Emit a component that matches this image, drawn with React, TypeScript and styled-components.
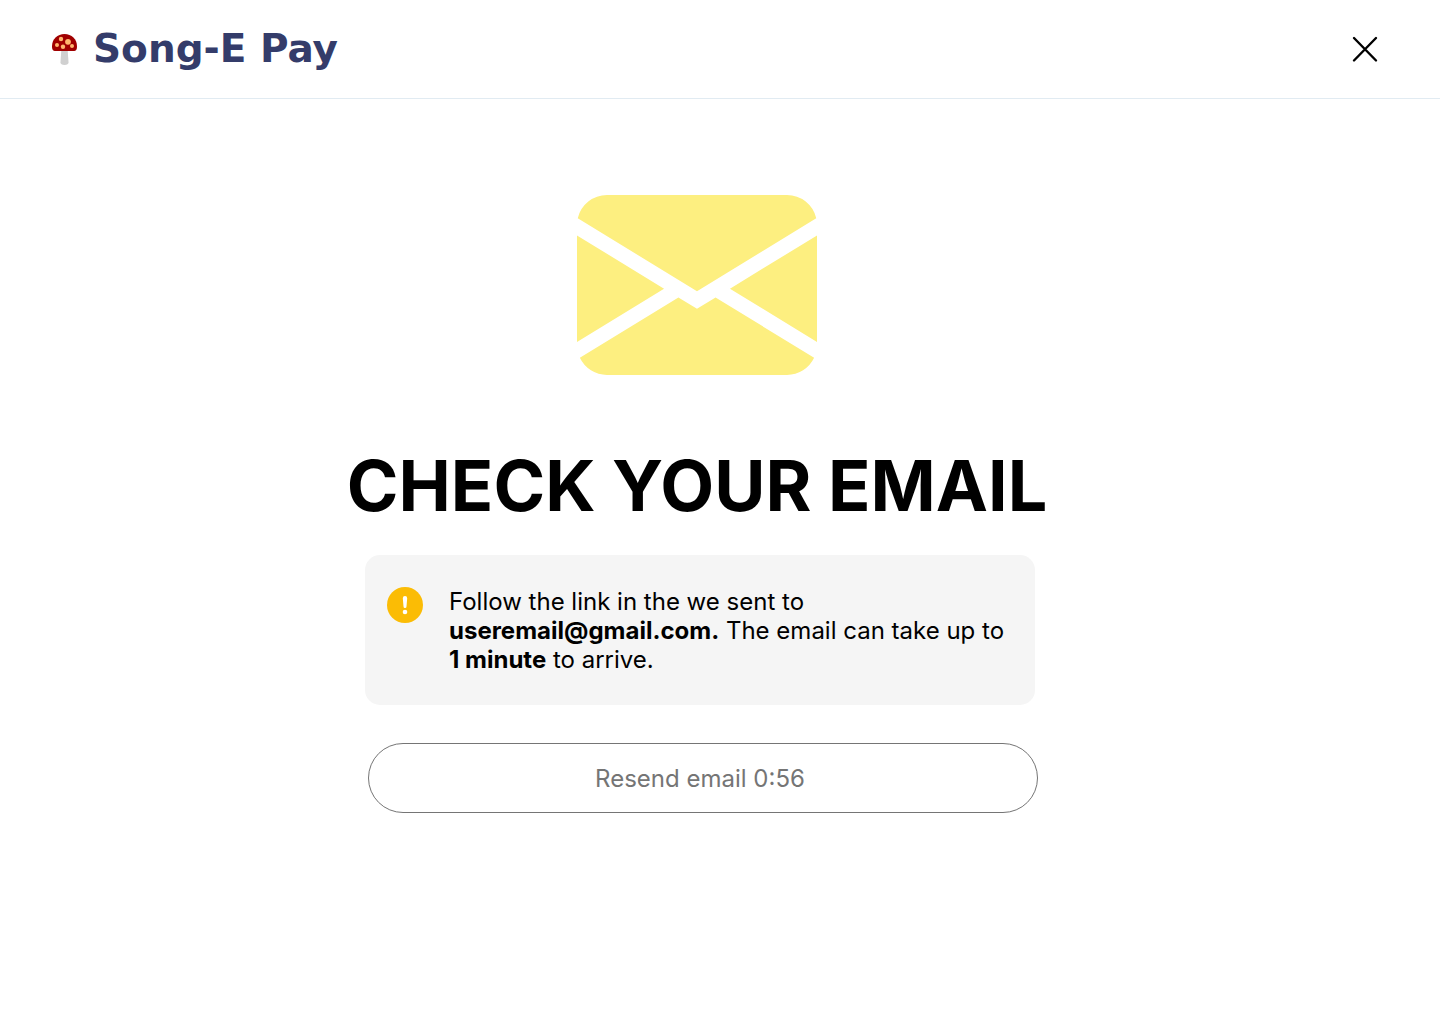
import React from "react";
import styled, { createGlobalStyle } from "styled-components";

const GlobalStyle = createGlobalStyle`
  * { box-sizing: border-box; }
  body {
    margin: 0;
    background: #fff;
    color: #000;
    font-family: Inter, "Liberation Sans", sans-serif;
  }
`;

const Header = styled.header`
  display: flex;
  align-items: center;
  justify-content: space-between;
  height: 99px;
  padding: 0 60px 0 52px;
  border-bottom: 1px solid #e1ebf2;
`;

const Brand = styled.a`
  display: flex;
  align-items: center;
  gap: 15px;
  color: #343c6a;
  font: 700 39px/56px "DejaVu Sans", sans-serif;
  text-decoration: none;
`;

const CloseButton = styled.button`
  display: flex;
  padding: 0;
  border: 0;
  background: none;
  color: #000;
  cursor: pointer;
`;

const Main = styled.main`
  display: flex;
  justify-content: center;
  padding: 96px 46px 48px 0;
`;

const Column = styled.div`
  display: flex;
  flex-direction: column;
  align-items: center;
  width: 100%;
  max-width: 682px;
`;

const Title = styled.h1`
  margin: 67px 0 26px;
  font-size: 70px;
  font-weight: 700;
  line-height: 87px;
  white-space: nowrap;
`;

const Notice = styled.section`
  display: flex;
  align-self: flex-end;
  align-items: flex-start;
  gap: 26px;
  width: 100%;
  max-width: 670px;
  margin-right: 3px;
  padding: 32px 22px 31px;
  border-radius: 15px;
  background: #f5f5f5;
`;

const NoticeIcon = styled.svg`
  flex: none;
`;

const NoticeText = styled.p`
  margin: 0;
  font-size: 24px;
  line-height: 29px;
`;

const ResendButton = styled.button`
  align-self: flex-end;
  width: 100%;
  max-width: 670px;
  height: 70px;
  margin-top: 38px;
  padding: 0 6px 0 0;
  border: 1px solid #757575;
  border-radius: 35px;
  background: none;
  color: #757575;
  font: 400 24px/29px Inter, "Liberation Sans", sans-serif;
`;

function Mushroom() {
  return (
    <svg width="26" height="32" viewBox="0 0 26 32" aria-hidden="true">
      <path d="M9.3 17h6.4l.8 12.2c0 1.8-1.3 2.8-4 2.8s-4-1-4-2.8z" fill="#d0d0d0" />
      <path d="M12.5 1C5.4 1 0 6.2 0 13.2c0 3.6 1 4.8 3.6 4.8h17.8c2.6 0 3.6-1.2 3.6-4.8C25 6.2 19.6 1 12.5 1z" fill="#a00000" />
      <g fill="#ffb66e">
        <circle cx="9" cy="6" r="2.2" />
        <circle cx="16" cy="8.8" r="2.9" />
        <circle cx="5" cy="12" r="2" />
        <circle cx="11" cy="13.7" r="2.2" />
        <circle cx="20" cy="13.1" r="2" />
      </g>
    </svg>
  );
}

function Envelope() {
  return (
    <svg width="240" height="180" viewBox="0 2 16 12" fill="#fdef80" aria-hidden="true">
      <path d="M.05 3.555A2 2 0 0 1 2 2h12a2 2 0 0 1 1.95 1.555L8 8.414.05 3.555ZM0 4.697v7.104l5.803-3.558L0 4.697ZM6.761 8.83l-6.57 4.027A2 2 0 0 0 2 14h12a2 2 0 0 0 1.808-1.144l-6.57-4.027L8 9.586l-1.239-.757Zm3.436-.586L16 11.801V4.697l-5.803 3.546Z" />
    </svg>
  );
}

export default function App() {
  return (
    <>
      <GlobalStyle />
      <Header>
        <Brand href="#">
          <Mushroom />
          Song-E Pay
        </Brand>
        <CloseButton type="button" aria-label="Close">
          <svg width="30" height="30" viewBox="0 0 30 30" fill="none" stroke="currentColor" strokeWidth="2.4" strokeLinecap="round">
            <path d="M4 4l22 22.5M26 4L4 26.5" />
          </svg>
        </CloseButton>
      </Header>
      <Main>
        <Column>
          <Envelope />
          <Title>CHECK YOUR EMAIL</Title>
          <Notice>
            <NoticeIcon width="36" height="36" viewBox="0 0 36 36" aria-hidden="true">
              <circle cx="18" cy="18" r="18" fill="#fbbc05" />
              <path d="M15.8 11.2a2.2 2.2 0 0 1 4.4 0l-.7 8.2a1.5 1.5 0 0 1-3 0z" fill="#fff" />
              <circle cx="18" cy="25" r="2.3" fill="#fff" />
            </NoticeIcon>
            <NoticeText>
              Follow the link in the we sent to <strong>useremail@gmail.com.</strong> The email can take up to{" "}
              <strong>1 minute</strong> to arrive.
            </NoticeText>
          </Notice>
          <ResendButton type="button">Resend email 0:56</ResendButton>
        </Column>
      </Main>
    </>
  );
}
